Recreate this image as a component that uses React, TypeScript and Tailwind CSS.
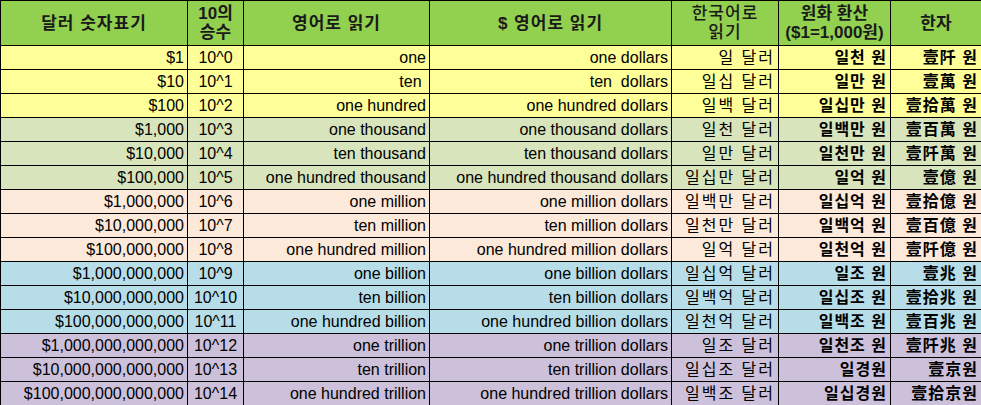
const rows: [string, string, string, string, string, string, string, string][] = [
  ["bg-[#ffff99]", "$1", "10^0", "one", "one dollars", "일 달러", "일천 원", "壹阡 원"],
  ["bg-[#ffff99]", "$10", "10^1", "ten ", "ten  dollars", "일십 달러", "일만 원", "壹萬 원"],
  ["bg-[#ffff99]", "$100", "10^2", "one hundred", "one hundred dollars", "일백 달러", "일십만 원", "壹拾萬 원"],
  ["bg-[#d8e4bc]", "$1,000", "10^3", "one thousand", "one thousand dollars", "일천 달러", "일백만 원", "壹百萬 원"],
  ["bg-[#d8e4bc]", "$10,000", "10^4", "ten thousand", "ten thousand dollars", "일만 달러", "일천만 원", "壹阡萬 원"],
  ["bg-[#d8e4bc]", "$100,000", "10^5", "one hundred thousand", "one hundred thousand dollars", "일십만 달러", "일억 원", "壹億 원"],
  ["bg-[#fde9d9]", "$1,000,000", "10^6", "one million", "one million dollars", "일백만 달러", "일십억 원", "壹拾億 원"],
  ["bg-[#fde9d9]", "$10,000,000", "10^7", "ten million", "ten million dollars", "일천만 달러", "일백억 원", "壹百億 원"],
  ["bg-[#fde9d9]", "$100,000,000", "10^8", "one hundred million", "one hundred million dollars", "일억 달러", "일천억 원", "壹阡億 원"],
  ["bg-[#b7dee8]", "$1,000,000,000", "10^9", "one billion", "one billion dollars", "일십억 달러", "일조 원", "壹兆 원"],
  ["bg-[#b7dee8]", "$10,000,000,000", "10^10", "ten billion", "ten billion dollars", "일백억 달러", "일십조 원", "壹拾兆 원"],
  ["bg-[#b7dee8]", "$100,000,000,000", "10^11", "one hundred billion", "one hundred billion dollars", "일천억 달러", "일백조 원", "壹百兆 원"],
  ["bg-[#ccc0da]", "$1,000,000,000,000", "10^12", "one trillion", "one trillion dollars", "일조 달러", "일천조 원", "壹阡兆 원"],
  ["bg-[#ccc0da]", "$10,000,000,000,000", "10^13", "ten trillion", "ten trillion dollars", "일십조 달러", "일경원", "壹京원"],
  ["bg-[#ccc0da]", "$100,000,000,000,000", "10^14", "one hundred trillion", "one hundred trillion dollars", "일백조 달러", "일십경원", "壹拾京원"],
];

const th = "border border-black px-1 py-0 text-center text-[17px] font-bold leading-[19px]";
const td = "border border-black px-[3px] py-0 leading-[20px] whitespace-pre overflow-hidden";

export default function App() {
  return (
    <div className="w-[981px] h-[405px] overflow-hidden bg-white text-black font-['Liberation_Sans','Noto_Sans_CJK_KR',sans-serif] text-[16px]">
      <table className="w-[981px] table-fixed border-collapse">
        <colgroup>
          <col className="w-[187px]" />
          <col className="w-[56px]" />
          <col className="w-[186px]" />
          <col className="w-[242px]" />
          <col className="w-[107px]" />
          <col className="w-[112px]" />
          <col className="w-[91px]" />
        </colgroup>
        <thead>
          <tr className="h-[45px] bg-[#92d050] text-[#1a1a1a]">
            <th className={th}>
              <span className="tracking-[1px]">달러 숫자표기</span>
            </th>
            <th className={th}>
              10의
              <br />
              승수
            </th>
            <th className={th}>
              <span className="tracking-[1px]">영어로 읽기</span>
            </th>
            <th className={th}>
              <span className="tracking-[1px]">$ 영어로 읽기</span>
            </th>
            <th className={th + " font-medium"}>
              <span className="tracking-[1px]">
                한국어로
                <br />
                읽기
              </span>
            </th>
            <th className={th}>
              원화 환산
              <br />
              ($1=1,000원)
            </th>
            <th className={th}>한자</th>
          </tr>
        </thead>
        <tbody>
          {rows.map((r) => (
            <tr key={r[1]} className={"h-[24px] " + r[0]}>
              <td className={td + " text-right"}>{r[1]}</td>
              <td className={td + " text-center"}>{r[2]}</td>
              <td className={td + " text-right"}>{r[3]}</td>
              <td className={td + " text-right"}>{r[4]}</td>
              <td className={td + " text-right tracking-[2px]"}>{r[5]}</td>
              <td className={td + " text-right font-bold tracking-[1px]"}>{r[6]}</td>
              <td className={td + " text-right font-bold tracking-[1px]"}>{r[7]}</td>
            </tr>
          ))}
        </tbody>
      </table>
    </div>
  );
}
